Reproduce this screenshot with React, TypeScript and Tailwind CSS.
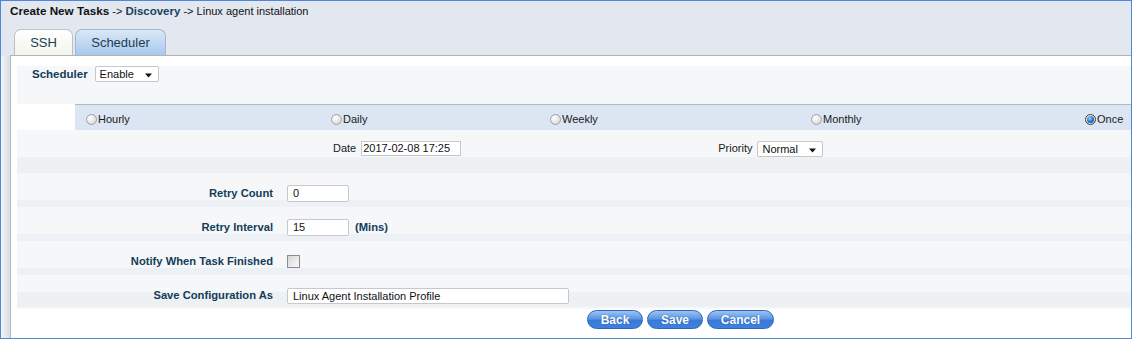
import React from 'react';

const Arrow = () => (
    <svg width="7" height="5" viewBox="0 0 7 5" className="absolute right-[6px] top-[6px]">
        <polygon points="0,0.5 7,0.5 3.5,4.5" fill="#111" />
    </svg>
);

const Select: React.FC<{ value: string; width: string }> = ({ value, width }) => (
    <div className={`relative h-[16px] ${width} border border-[#c4c7cb] rounded-[2px] bg-white pl-[4px] text-[11px] leading-[14px] text-[#111]`}>
        {value}
        <Arrow />
    </div>
);

const Radio: React.FC<{ label: string; checked?: boolean }> = ({ label, checked }) => (
    <div className="flex items-center text-[11px] text-[#1a1a1a]">
        <span
            className={`relative inline-block w-[11px] h-[11px] rounded-full border ${checked ? 'border-[#3a3a3a]' : 'border-[#a0a0a0]'} bg-[radial-gradient(circle_at_35%_35%,#ffffff,#cfcfcf)]`}
        >
            {checked && <span className="absolute inset-[1px] rounded-full bg-[radial-gradient(circle_at_40%_35%,#9ad2ff,#1565c8_60%,#0a3f8f)]" />}
        </span>
        <span className="ml-[1px]">{label}</span>
    </div>
);

const rowBg = 'bg-[linear-gradient(to_bottom,#f5f7f9_0px,#f5f7f9_27px,#edf0f4_27px,#edf0f4_100%)]';

const FormRow: React.FC<{ label: string; children: React.ReactNode; className?: string }> = ({ label, children, className }) => (
    <div className={`h-[34px] pt-[12px] ${className ?? rowBg}`}>
        <div className="flex items-center h-[17px]">
            <div className="w-[256px] text-right font-bold text-[11.2px] text-[#133c58]">{label}</div>
            <div className="ml-[14px] flex items-center">{children}</div>
        </div>
    </div>
);

const TextInput: React.FC<{ value: string; width: string; height?: string }> = ({ value, width, height }) => (
    <div className={`${width} ${height ?? 'h-[17px]'} border border-[#c5c9cd] rounded-[2px] bg-white pl-[5px] text-[11px] leading-[15px] text-[#111]`}>
        {value}
    </div>
);

const PillButton: React.FC<{ label: string; width: string }> = ({ label, width }) => (
    <button className={`${width} h-[19px] rounded-full border border-[#2d66bd] bg-[linear-gradient(to_bottom,#9cc4f2_0%,#5b96e4_45%,#3a79d8_55%,#3f80de_100%)] text-white font-bold text-[12px] leading-[16px] [text-shadow:0_0_1px_#1b4a90]`}>
        {label}
    </button>
);

export default function App() {
    return (
        <div className="w-[1132px] h-[339px] border border-[#4d89d6] bg-[#e3e8f0] flex flex-col font-['Liberation_Sans',Arial,sans-serif] overflow-hidden">
            {/* breadcrumb */}
            <div className="h-[28px] pl-[9px] pt-[3px] text-[11px] leading-[14px] text-[#111]">
                <span className="font-bold text-[11.7px]">Create New Tasks</span>
                <span> -&gt; </span>
                <span className="font-bold text-[11.5px] text-[#16435f]">Discovery</span>
                <span> -&gt; Linux agent installation</span>
            </div>

            {/* tabs */}
            <div className="h-[27px] ml-[9px] pl-[4px] flex items-end gap-[2px] border-b border-[#b3b3b3]">
                <div className="w-[59px] h-[26px] rounded-t-[7px] border border-b-0 border-[#bfc2c4] bg-[linear-gradient(to_bottom,#ffffff,#f2f5ec)] text-center text-[13px] leading-[25px] text-[#1d3d52]">
                    SSH
                </div>
                <div className="w-[91px] h-[26px] rounded-t-[7px] border border-b-0 border-[#9fb8d6] bg-[linear-gradient(to_bottom,#dbe8f6,#a8c8ed)] text-center text-[13px] leading-[25px] text-[#1d3d52]">
                    Scheduler
                </div>
            </div>

            <div className="flex-1 flex">
                <div className="w-[10px] border-r border-[#b6b9bf] bg-[linear-gradient(to_right,#f2f4f7,#d9dce1)]" />
                <div className="flex-1 bg-white pl-[6px] pt-[10px]">
                    {/* scheduler enable */}
                    <div className="h-[38px] bg-[#f5f7f9]">
                        <div className="flex items-center h-[16px] pl-[15px]">
                            <span className="font-bold text-[11.5px] leading-[18px] text-[#133c58]">Scheduler</span>
                            <div className="ml-[7px]">
                                <Select value="Enable" width="w-[64px]" />
                            </div>
                        </div>
                    </div>

                    {/* frequency radios */}
                    <div className="ml-[58px] h-[26px] border-t border-[#a7bbd6] bg-[#dce6f2] flex items-center pt-[4px] pl-[11px]">
                        <div className="w-[245px]"><Radio label="Hourly" /></div>
                        <div className="w-[219px]"><Radio label="Daily" /></div>
                        <div className="w-[261px]"><Radio label="Weekly" /></div>
                        <div className="w-[274px]"><Radio label="Monthly" /></div>
                        <Radio label="Once" checked />
                    </div>

                    {/* date / priority */}
                    <div className="h-[27px] bg-[#f5f7f9] pt-[11px] flex items-start text-[11px] text-[#1a1a1a]">
                        <div className="ml-[316px] flex items-center h-[15px]">
                            <span>Date</span>
                            <div className="ml-[5px] w-[100px] h-[15px] border border-[#c5c9cd] bg-white pl-[1px] text-[11px] leading-[13px] text-[#111]">
                                2017-02-08 17:25
                            </div>
                        </div>
                        <div className="ml-[257px] flex items-center h-[15px]">
                            <span>Priority</span>
                            <div className="ml-[5px]">
                                <Select value="Normal" width="w-[66px]" />
                            </div>
                        </div>
                    </div>

                    <div className="h-[16px] bg-[#eef1f4]" />

                    <FormRow label="Retry Count">
                        <TextInput value="0" width="w-[62px]" />
                    </FormRow>
                    <FormRow label="Retry Interval">
                        <TextInput value="15" width="w-[62px]" />
                        <span className="ml-[6px] font-bold text-[11.2px] text-[#133c58]">(Mins)</span>
                    </FormRow>
                    <FormRow label="Notify When Task Finished">
                        <span className="inline-block w-[13px] h-[13px] border border-[#8c8c8c] bg-[linear-gradient(135deg,#d6d6d6,#fbfbfb)]" />
                    </FormRow>
                    <FormRow
                        label="Save Configuration As"
                        className="bg-[linear-gradient(to_bottom,#f5f7f9_0px,#f5f7f9_17px,#eef1f4_17px,#eef1f4_32px,#f5f7f9_32px,#f5f7f9_100%)]"
                    >
                        <TextInput value="Linux Agent Installation Profile" width="w-[282px]" height="h-[16px]" />
                    </FormRow>

                    {/* actions */}
                    <div className="flex gap-[4px] ml-[570px] pt-[1px]">
                        <PillButton label="Back" width="w-[56px]" />
                        <PillButton label="Save" width="w-[56px]" />
                        <PillButton label="Cancel" width="w-[67px]" />
                    </div>
                </div>
            </div>
        </div>
    );
}
